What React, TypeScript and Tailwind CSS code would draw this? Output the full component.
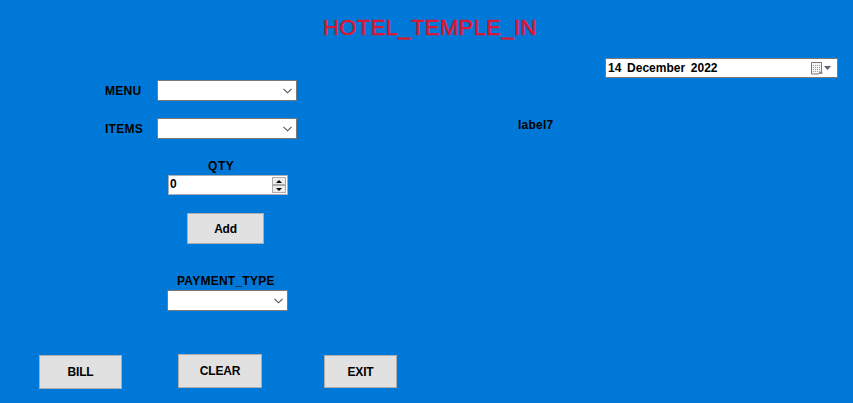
import type { ReactNode } from "react";

function SelectBox({ className }: { className: string }) {
  return (
    <div
      role="combobox"
      className={`flex h-[21px] items-center justify-end border border-[#7a7a7a] bg-white pr-1 ${className}`}
    >
      <svg width="9" height="6" viewBox="0 0 9 6" fill="none" stroke="#505050" strokeWidth="1.1">
        <path d="M0.5 0.8 4.5 4.8 8.5 0.8" />
      </svg>
    </div>
  );
}

function PushButton({ className, children }: { className: string; children: ReactNode }) {
  return (
    <button
      className={`flex items-center justify-center border border-[#adadad] bg-[#e1e1e1] tracking-[-0.2px] ${className}`}
    >
      {children}
    </button>
  );
}

function Spinner() {
  return (
    <div className="flex h-5 w-[120px] justify-between border border-[#abadb3] bg-white">
      <span className="pl-[1px] leading-[17px]">0</span>
      <div className="mr-[1px] flex w-[14px] flex-col py-px">
        <div className="flex h-2 items-center justify-center border border-[#acacac] bg-[#ededed]">
          <svg width="6" height="3" viewBox="0 0 6 3">
            <path d="M0 3 3 0 6 3Z" fill="#000" />
          </svg>
        </div>
        <div className="flex h-2 items-center justify-center border border-[#acacac] bg-[#ededed]">
          <svg width="6" height="3" viewBox="0 0 6 3">
            <path d="M0 0 3 3 6 0Z" fill="#000" />
          </svg>
        </div>
      </div>
    </div>
  );
}

function DatePicker() {
  return (
    <div className="flex h-5 w-[233px] items-center border border-[#7a7a7a] bg-white pl-[2px] pr-[6px]">
      <span className="grow [word-spacing:2.4px]">14 December 2022</span>
      <svg width="12" height="13" viewBox="0 0 12 13" fill="none">
        <path d="M0.5 0.5H10.5V9.5L8 12H0.5Z" fill="#f4f4f4" stroke="#77777b" />
        <path d="M8 12V9.5H10.5L11.5 10.5V12Z" fill="#8b8b90" />
        <path
          d="M2 3.5H9.5M2 5.5H9.5M2 7.5H9.5M2 9.5H7.5"
          stroke="#9c9ca2"
          strokeDasharray="1 1"
        />
      </svg>
      <svg className="ml-[1px]" width="7" height="4" viewBox="0 0 7 4">
        <path d="M0 0H7L3.5 4Z" fill="#586070" />
      </svg>
    </div>
  );
}

export default function App() {
  return (
    <div className="flex h-[403px] w-[853px] flex-col overflow-hidden bg-[#0078d7] font-['Liberation_Sans',Arial,sans-serif] text-[12px] leading-[14px] font-bold text-black">
      <h1 className="h-[58px] pt-[15px] pl-[323px] text-[22px] leading-[26px] font-normal tracking-[0.4px] whitespace-nowrap text-[#dc1632] [-webkit-text-stroke:0.6px_#dc1632]">
        HOTEL_TEMPLE_IN
      </h1>
      <main className="flex h-[296px] justify-between pr-[15px]">
        <form className="w-[300px] pt-[22px] tracking-[0.25px]">
          <div className="flex items-center">
            <label className="w-[157px] pl-[105px]">MENU</label>
            <SelectBox className="w-[140px]" />
          </div>
          <div className="mt-[17px] flex items-center">
            <label className="w-[157px] pl-[105px]">ITEMS</label>
            <SelectBox className="w-[140px]" />
          </div>
          <div className="mt-5 ml-[168px]">
            <label className="block h-4 pl-[40px] tracking-[0.6px]">QTY</label>
            <Spinner />
          </div>
          <PushButton className="mt-[18px] ml-[187px] h-[31px] w-[77px]">Add</PushButton>
          <div className="mt-[30px] ml-[167px]">
            <label className="block h-4 pl-[10px]">PAYMENT_TYPE</label>
            <SelectBox className="w-[121px]" />
          </div>
        </form>
        <section className="flex w-[320px] flex-col">
          <div className="flex justify-end">
            <DatePicker />
          </div>
          <p className="mt-10 tracking-[0.25px]">label7</p>
        </section>
      </main>
      <footer className="flex items-start pl-[39px]">
        <PushButton className="mt-px h-[34px] w-[83px]">BILL</PushButton>
        <PushButton className="ml-14 h-[34px] w-[84px]">CLEAR</PushButton>
        <PushButton className="mt-px ml-[62px] h-[33px] w-[73px]">EXIT</PushButton>
      </footer>
    </div>
  );
}
